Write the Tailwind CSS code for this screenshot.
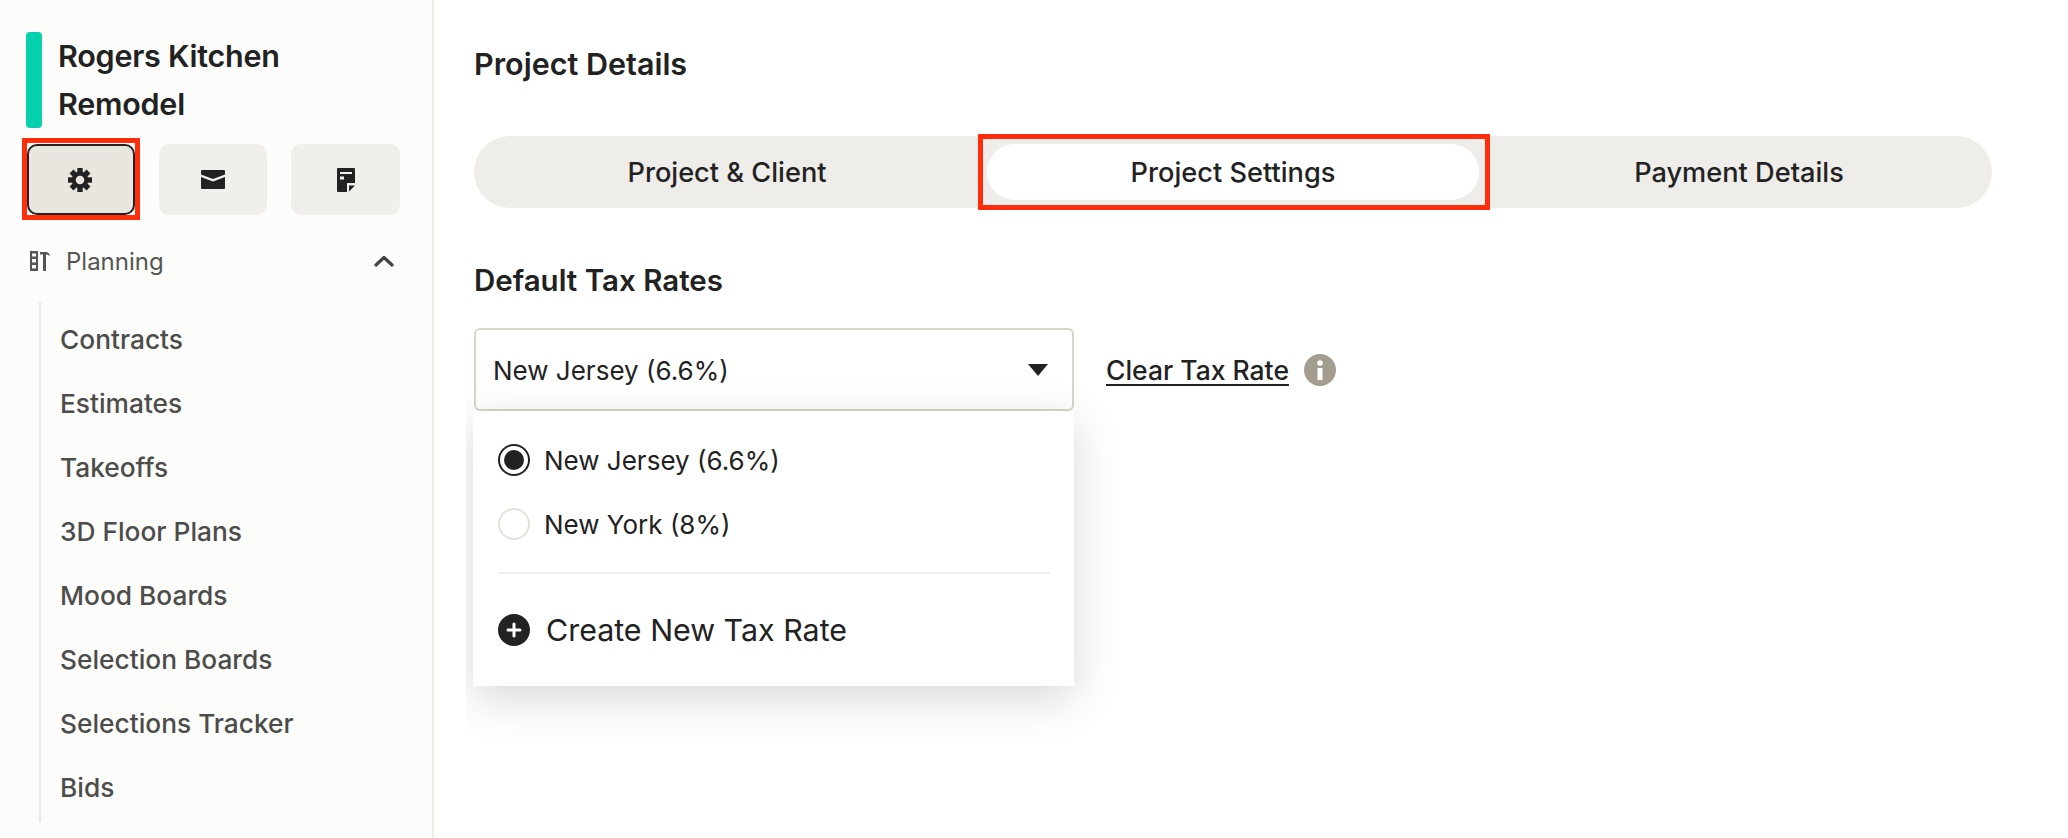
<!DOCTYPE html>
<html><head><meta charset="utf-8">
<script src="https://cdn.jsdelivr.net/npm/@tailwindcss/browser@4"></script>
</head>
<body class="bg-white">
<div class="flex w-[2068px] h-[838px] overflow-hidden bg-white text-[#222222] font-['Inter','Liberation_Sans',sans-serif]">
  <aside class="w-[434px] shrink-0 bg-[#fcfcfa] border-r-2 border-[#efeeea] pl-[26px] pr-[32px] pt-[32px]">
    <div class="flex h-[96px] gap-[16px]">
      <div class="w-4 h-[96px] rounded-[4px] bg-[#05d1ae]"></div>
      <div class="text-[30.500px] tracking-[-0.25px] leading-[48px] font-semibold">Rogers Kitchen<br>Remodel</div>
    </div>
    <div class="flex gap-[24px] mt-[16px] pl-px">
      <div class="relative w-[108px] h-[71px] rounded-[10px] bg-[#e8e6de] border-2 border-[#222222] flex items-center justify-center">
        <svg class="w-[24px] h-[24px] -ml-[2px]" viewBox="0 0 24 24" fill="#222222">
          <circle cx="12" cy="12" r="8.300"/>
          <rect x="9.300" y="0" width="5.400" height="6"/>
          <rect x="9.300" y="0" width="5.400" height="6" transform="rotate(45 12 12)"/>
          <rect x="9.300" y="0" width="5.400" height="6" transform="rotate(90 12 12)"/>
          <rect x="9.300" y="0" width="5.400" height="6" transform="rotate(135 12 12)"/>
          <rect x="9.300" y="0" width="5.400" height="6" transform="rotate(180 12 12)"/>
          <rect x="9.300" y="0" width="5.400" height="6" transform="rotate(225 12 12)"/>
          <rect x="9.300" y="0" width="5.400" height="6" transform="rotate(270 12 12)"/>
          <rect x="9.300" y="0" width="5.400" height="6" transform="rotate(315 12 12)"/>
          <circle cx="12" cy="12" r="4.300" fill="#e8e6de"/>
        </svg>
        <div class="absolute -left-[7px] -right-[7px] -top-[8px] -bottom-[7px] border-[5px] border-[#ff2d0a]"></div>
      </div>
      <div class="w-[108px] h-[71px] rounded-[10px] bg-[#f0efeb] flex items-center justify-center">
        <svg class="w-[24px] h-[19px]" viewBox="0 0 24 19"><path d="M1 0H23a1 1 0 0 1 1 1V4.500L12 9 0 4.500V1A1 1 0 0 1 1 0Z" fill="#222222"/><path d="M0 7L12 11.500 24 7V18a1 1 0 0 1-1 1H1a1 1 0 0 1-1-1Z" fill="#222222"/></svg>
      </div>
      <div class="w-[109px] h-[71px] rounded-[10px] bg-[#f0efeb] flex items-center justify-center">
        <svg class="w-[18px] h-[24px]" viewBox="0 0 18 24"><path d="M1 0H17A1 1 0 0 1 18 1V15H10V24H1A1 1 0 0 1 0 23V1A1 1 0 0 1 1 0Z" fill="#222222"/><rect x="3" y="4" width="12" height="2" fill="#f0efeb"/><rect x="3" y="8.500" width="4" height="3" fill="#f0efeb"/><path d="M12 17.500H18L12 23.500Z" fill="#222222"/></svg>
      </div>
    </div>
    <div class="flex items-center h-[24px] mt-[34px] pl-[4px] pr-[6px]">
      <svg class="w-[20px] h-[20px] text-[#555553]" viewBox="0 0 20 20" fill="currentColor"><path fill-rule="evenodd" d="M0 0h8v20H0Zm2 2.500v3h4v-3Zm0 5.500v3.500h4V8Zm0 6v3.500h4V14Z"/><path d="M10 1H16Q19 1 20 5L17 3.500H16V20H13V3.500H10Z"/></svg>
      <span class="ml-[16px] pt-[2px] text-[24px] text-[#555553]">Planning</span>
      <svg class="ml-auto w-[20px] h-[12px]" viewBox="0 0 20 12" fill="none" stroke="#444442" stroke-width="3.200" stroke-linecap="round" stroke-linejoin="round"><path d="M2 10L10 2.500 18 10"/></svg>
    </div>
    <nav class="mt-[29px] ml-[13px] h-[520px] border-l-2 border-[#e8e7e2] pl-[19px] pt-[6px] text-[26.300px] font-medium text-[#4c4c4a]">
      <div class="h-[64px] flex items-center">Contracts</div>
      <div class="h-[64px] flex items-center">Estimates</div>
      <div class="h-[64px] flex items-center">Takeoffs</div>
      <div class="h-[64px] flex items-center">3D Floor Plans</div>
      <div class="h-[64px] flex items-center">Mood Boards</div>
      <div class="h-[64px] flex items-center">Selection Boards</div>
      <div class="h-[64px] flex items-center">Selections Tracker</div>
      <div class="h-[64px] flex items-center">Bids</div>
    </nav>
  </aside>
  <main class="flex-1 pl-[32px] pt-[44px]">
    <div class="pl-[8px] pr-[76px] h-[780px] overflow-hidden">
      <h1 class="text-[30.500px] leading-[40px] font-semibold">Project Details</h1>
      <div class="mt-[52px] h-[72px] w-[1518px] rounded-full bg-[#eeede9] grid grid-cols-3 text-[27.200px] font-medium">
        <div class="flex items-center justify-center pt-[2px]">Project &amp; Client</div>
        <div class="relative mx-[7px] my-[8px] pt-[2px] rounded-full bg-white flex items-center justify-center">Project Settings
          <div class="absolute -left-[9px] -right-[11px] -top-[10px] -bottom-[10px] border-[5px] border-[#ff2d0a]"></div>
        </div>
        <div class="flex items-center justify-center pt-[2px]">Payment Details</div>
      </div>
      <h2 class="mt-[52px] text-[29.500px] leading-[40px] font-semibold">Default Tax Rates</h2>
      <div class="relative mt-[28px] flex items-center w-[900px] whitespace-nowrap">
        <div class="w-[600px] h-[83px] shrink-0 rounded-[6px] border-2 border-[#d8d5c8] bg-white flex items-center pl-[17px] pr-[24px] text-[26px]">
          <span class="pt-[2px]">New Jersey (6.6%)</span>
          <span class="ml-auto w-0 h-0 border-x-[10px] border-x-transparent border-t-[12px] border-t-[#222222]"></span>
        </div>
        <span class="ml-[32px] pt-[2px] text-[26.500px] font-medium underline underline-offset-4">Clear Tax Rate</span>
        <span class="ml-[15px] w-[32px] h-[32px] shrink-0 rounded-full bg-[#a39d90] flex items-center justify-center">
          <svg class="w-[6px] h-[20px]" viewBox="0 0 6 20" fill="white"><circle cx="3" cy="3" r="2.800"/><path d="M.5 8h5v12h-5Z"/></svg>
        </span>
      </div>
      <div class="relative z-10 w-[601px] h-[275px] -ml-px bg-white shadow-[0_12px_44px_rgba(0,0,0,0.16)] px-[25px] pt-[33px]">
        <div class="flex items-center h-[32px] text-[26px]">
          <span class="w-[32px] h-[32px] rounded-full border-2 border-[#222222] flex items-center justify-center"><span class="w-[20px] h-[20px] rounded-full bg-[#222222]"></span></span>
          <span class="ml-[14px]">New Jersey (6.6%)</span>
        </div>
        <div class="flex items-center h-[32px] mt-[32px] text-[26px]">
          <span class="w-[32px] h-[32px] rounded-full border-2 border-[#e3e1d9]"></span>
          <span class="ml-[14px]">New York (8%)</span>
        </div>
        <div class="mt-[32px] h-[2px] w-[552px] bg-[#eeede9]"></div>
        <div class="flex items-center h-[32px] mt-[40px] text-[30.400px]">
          <span class="w-[32px] h-[32px] rounded-full bg-[#222222] flex items-center justify-center">
            <svg class="w-[16px] h-[16px]" viewBox="0 0 16 16" fill="none" stroke="white" stroke-width="3" stroke-linecap="round"><path d="M8 2v12M2 8h12"/></svg>
          </span>
          <span class="ml-[16px] pt-[1px]">Create New Tax Rate</span>
        </div>
      </div>
    </div>
  </main>
</div>
</body></html>
